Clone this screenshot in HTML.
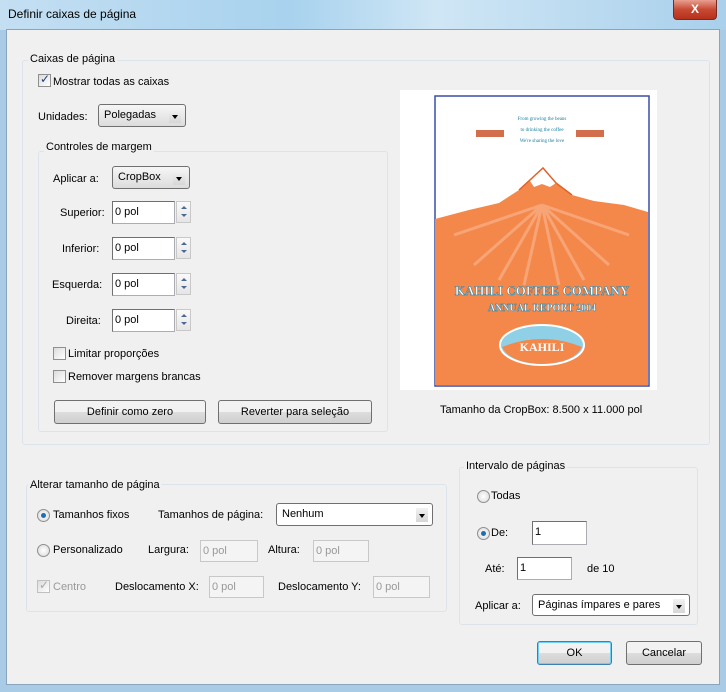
<!DOCTYPE html>
<html><head><meta charset="utf-8"><style>
*{margin:0;padding:0;box-sizing:border-box}
body{width:726px;height:692px;position:relative;overflow:hidden;font-family:"Liberation Sans",sans-serif;font-size:11px;color:#000;background:#a9cbe6}
.a{position:absolute}
.t{position:absolute;white-space:nowrap;line-height:13px}
.grp{position:absolute;border:1px solid #dde3ea;border-radius:3px}
.lbl{position:absolute;background:#f0f0f0;padding:0 2px;line-height:13px;white-space:nowrap}
.inp{position:absolute;background:#fff;border:1px solid #abadb3;border-top-color:#707070;border-left-color:#707070;padding:3px 2px;line-height:14px}
.dis{background:#f4f4f4;color:#999;border-color:#c8c8c8}
.sel{position:absolute;background:linear-gradient(#f6f6f6,#dcdcdc);border:1px solid #707070;border-radius:3px;padding:3px 5px;line-height:14px}
.sel.w{background:#fff}
.sel:after{content:"";position:absolute;right:4px;top:4px;width:12px;height:14px;background:linear-gradient(#f2f2f2,#d6d6d6)}
.sel:before{content:"";position:absolute;right:7px;top:10px;border:3px solid transparent;border-top:4px solid #000;z-index:2}
.btn{position:absolute;background:linear-gradient(#f2f2f2 50%,#dddddd 50%,#cfcfcf);border:1px solid #707070;border-radius:3px;text-align:center;line-height:22px}
.cb{position:absolute;width:13px;height:13px;border:1px solid #8e8f8f;background:linear-gradient(135deg,#dcdcdc,#fff)}
.rd{position:absolute;width:13px;height:13px;border:1px solid #8e8f8f;border-radius:50%;background:radial-gradient(#fff,#d8d8d8)}
.rd.on:after{content:"";position:absolute;left:3px;top:3px;width:5px;height:5px;border-radius:50%;background:#1a6fb5}
.sp{position:absolute;width:15px;height:22px;border:1px solid #c8c8c8;background:linear-gradient(#fafafa,#e6e6e6)}
.sp:before,.sp:after{content:"";position:absolute;left:4px;border:3px solid transparent}
.sp:before{top:1px;border-bottom:3px solid #4a6a94}
.sp:after{top:12px;border-top:3px solid #4a6a94}
</style></head><body>
<div class="a" style="left:0;top:0;width:726px;height:30px;background:linear-gradient(90deg,#c4dff2,#a8d2ee 40%,#cfe6f5 60%,#a9d0ec)"></div>
<div class="t" style="left:8px;top:8px;font-size:12px">Definir caixas de página</div>
<div class="a" style="left:673px;top:0;width:44px;height:20px;background:linear-gradient(#e8a090,#c74a33 50%,#b8301a);border:1px solid #7a2b20;border-top:none;border-radius:0 0 4px 4px;color:#fff;font-weight:bold;text-align:center;line-height:18px;font-size:12px">X</div>
<div class="a" style="left:6px;top:29px;width:714px;height:656px;background:#f0f0f0;border:1px solid #8aa4bd"></div>

<div class="grp" style="left:22px;top:60px;width:688px;height:385px"></div>
<div class="lbl" style="left:28px;top:53px">Caixas de página</div>
<div class="cb" style="left:38px;top:74px"><span style="position:absolute;left:1px;top:-3px;font-size:12px;color:#1e3f7a">✓</span></div>
<div class="t" style="left:53px;top:76px">Mostrar todas as caixas</div>
<div class="t" style="left:38px;top:111px">Unidades:</div>
<div class="sel" style="left:98px;top:104px;width:88px;height:23px">Polegadas</div>

<div class="grp" style="left:38px;top:151px;width:350px;height:281px"></div>
<div class="lbl" style="left:44px;top:141px">Controles de margem</div>
<div class="t" style="left:53px;top:173px">Aplicar a:</div>
<div class="sel" style="left:112px;top:166px;width:78px;height:23px">CropBox</div>
<div class="t" style="left:60px;top:207px">Superior:</div>
<div class="inp" style="left:112px;top:201px;width:63px;height:23px">0 pol</div><div class="sp" style="left:176px;top:201px"></div>
<div class="t" style="left:62px;top:243px">Inferior:</div>
<div class="inp" style="left:112px;top:237px;width:63px;height:23px">0 pol</div><div class="sp" style="left:176px;top:237px"></div>
<div class="t" style="left:52px;top:279px">Esquerda:</div>
<div class="inp" style="left:112px;top:273px;width:63px;height:23px">0 pol</div><div class="sp" style="left:176px;top:273px"></div>
<div class="t" style="left:66px;top:315px">Direita:</div>
<div class="inp" style="left:112px;top:309px;width:63px;height:23px">0 pol</div><div class="sp" style="left:176px;top:309px"></div>
<div class="cb" style="left:53px;top:347px"></div><div class="t" style="left:68px;top:348px">Limitar proporções</div>
<div class="cb" style="left:53px;top:370px"></div><div class="t" style="left:68px;top:371px">Remover margens brancas</div>
<div class="btn" style="left:54px;top:400px;width:152px;height:24px">Definir como zero</div>
<div class="btn" style="left:218px;top:400px;width:154px;height:24px">Reverter para seleção</div>

<div class="a" style="left:400px;top:90px;width:257px;height:300px;background:#fff"></div>
<svg class="a" style="left:434px;top:95px" width="216" height="292" viewBox="0 0 216 292">
<rect x="1" y="1" width="214" height="290" fill="#fff" stroke="#3a4fa8" stroke-width="1.5"/>
<text x="108" y="25" font-size="5" fill="#1a7fa0" text-anchor="middle" font-family="Liberation Serif">From growing the beans</text>
<text x="108" y="36" font-size="5" fill="#1a7fa0" text-anchor="middle" font-family="Liberation Serif">to drinking the coffee</text>
<text x="108" y="47" font-size="5" fill="#1a7fa0" text-anchor="middle" font-family="Liberation Serif">We're sharing the love</text>
<rect x="42" y="35" width="28" height="7" fill="#c84a20" opacity=".8"/><rect x="142" y="35" width="28" height="7" fill="#c84a20" opacity=".8"/>
<path d="M1 124 L35 115 L65 108 L85 95 L97 84 L109 73 L122 88 L138 100 L160 106 L190 110 L214 117 L214 290 L1 290Z" fill="#f4884a"/>
<g stroke="#f9b08a" stroke-width="3" opacity=".7">
<path d="M108 110 L20 140 M108 110 L40 170 M108 110 L65 185 M108 110 L90 190 M108 110 L125 190 M108 110 L150 185 M108 110 L175 170 M108 110 L195 140"/></g>
<path d="M96 86 L109 73 L122 88 L116 92 L108 89 L100 92Z" fill="#fff"/>
<path d="M85 95 L97 84 L109 73 L122 88 L138 100" stroke="#e0622a" stroke-width="1.5" fill="none"/>
<text x="108" y="200" font-size="13" fill="#fff" stroke="#2d7c9c" stroke-width=".5" text-anchor="middle" font-family="Liberation Serif" font-weight="bold">KAHILI COFFEE COMPANY</text>
<text x="108" y="216" font-size="10" fill="#fff" stroke="#2d7c9c" stroke-width=".4" text-anchor="middle" font-family="Liberation Serif" font-weight="bold">ANNUAL REPORT 2004</text>
<ellipse cx="108" cy="250" rx="42" ry="20" fill="#8fd0e6" stroke="#fff" stroke-width="2"/>
<path d="M68 252 Q108 236 148 252 Q140 268 108 269 Q76 268 68 252Z" fill="#f4884a"/>
<text x="108" y="256" font-size="12" fill="#fff" text-anchor="middle" font-family="Liberation Serif" font-weight="bold">KAHILI</text>
</svg>
<div class="t" style="left:440px;top:404px">Tamanho da CropBox: 8.500 x 11.000 pol</div>

<div class="grp" style="left:26px;top:484px;width:421px;height:128px"></div>
<div class="lbl" style="left:28px;top:479px">Alterar tamanho de página</div>
<div class="rd on" style="left:37px;top:509px"></div><div class="t" style="left:53px;top:509px">Tamanhos fixos</div>
<div class="t" style="left:158px;top:509px">Tamanhos de página:</div>
<div class="sel w" style="left:276px;top:503px;width:157px;height:23px">Nenhum</div>
<div class="rd" style="left:37px;top:544px"></div><div class="t" style="left:53px;top:544px">Personalizado</div>
<div class="t" style="left:148px;top:544px">Largura:</div><div class="inp dis" style="left:200px;top:540px;width:58px;height:22px">0 pol</div>
<div class="t" style="left:268px;top:544px">Altura:</div><div class="inp dis" style="left:313px;top:540px;width:56px;height:22px">0 pol</div>
<div class="cb" style="left:37px;top:580px;border-color:#c0c0c0"><span style="position:absolute;left:1px;top:-3px;font-size:12px;color:#aaa">✓</span></div><div class="t" style="left:53px;top:581px;color:#999">Centro</div>
<div class="t" style="left:115px;top:581px">Deslocamento X:</div><div class="inp dis" style="left:209px;top:576px;width:55px;height:22px">0 pol</div>
<div class="t" style="left:278px;top:581px">Deslocamento Y:</div><div class="inp dis" style="left:373px;top:576px;width:57px;height:22px">0 pol</div>

<div class="grp" style="left:459px;top:467px;width:239px;height:158px"></div>
<div class="lbl" style="left:464px;top:460px">Intervalo de páginas</div>
<div class="rd" style="left:477px;top:490px"></div><div class="t" style="left:491px;top:490px">Todas</div>
<div class="rd on" style="left:477px;top:527px"></div><div class="t" style="left:491px;top:527px">De:</div>
<div class="inp" style="left:532px;top:521px;width:55px;height:24px">1</div>
<div class="t" style="left:485px;top:563px">Até:</div>
<div class="inp" style="left:517px;top:557px;width:55px;height:23px">1</div>
<div class="t" style="left:587px;top:563px">de 10</div>
<div class="t" style="left:475px;top:600px">Aplicar a:</div>
<div class="sel w" style="left:532px;top:594px;width:158px;height:22px">Páginas ímpares e pares</div>

<div class="btn" style="left:537px;top:641px;width:75px;height:24px;border-color:#3c7fb1;box-shadow:inset 0 0 0 1px #6fd0f7">OK</div>
<div class="btn" style="left:626px;top:641px;width:76px;height:24px">Cancelar</div>
</body></html>
